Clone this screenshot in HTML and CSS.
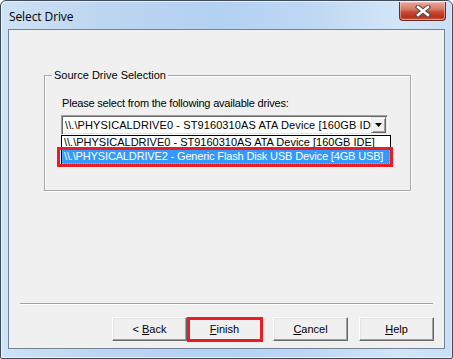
FILE: index.html
```html
<!DOCTYPE html>
<html>
<head>
<meta charset="utf-8">
<link rel="stylesheet" href="styles.css">
</head>
<body>
<div class="window">
  <div class="titlebar">
    <span class="title">Select Drive</span>
    <div class="close">
      <svg width="16" height="12" viewBox="0 0 16 12">
        <path d="M3 2 L13 10 M13 2 L3 10" stroke="#4a4a4a" stroke-width="4.4" stroke-linecap="square"/>
        <path d="M3 2 L13 10 M13 2 L3 10" stroke="#ffffff" stroke-width="2.4" stroke-linecap="square"/>
      </svg>
    </div>
  </div>
  <div class="client">
    <div class="group">
      <span class="group-label">Source Drive Selection</span>
      <div class="prompt">Please select from the following available drives:</div>
      <div class="combo">
        <span class="combo-text">\\.\PHYSICALDRIVE0 - ST9160310AS ATA Device [160GB IDE]</span>
        <span class="combo-btn">
          <svg width="7" height="4" viewBox="0 0 7 4"><path d="M0 0 H7 L3.5 4 Z" fill="#000"/></svg>
        </span>
      </div>
      <div class="droplist">
        <div class="item">\\.\PHYSICALDRIVE0 - ST9160310AS ATA Device [160GB IDE]</div>
        <div class="item selected"><span class="focus">\\.\PHYSICALDRIVE2 - Generic Flash Disk USB Device [4GB USB]</span></div>
      </div>
      <div class="mark mark-list"></div>
    </div>
    <div class="separator"></div>
    <div class="buttons">
      <div class="btn">&lt; <u>B</u>ack</div>
      <div class="btn btn-finish"><u>F</u>inish</div>
      <div class="btn btn-gap"><u>C</u>ancel</div>
      <div class="btn btn-gap"><u>H</u>elp</div>
    </div>
  </div>
</div>
</body>
</html>
```

FILE: styles.css
```css
*, *::before, *::after { box-sizing: border-box; }
html, body { margin: 0; padding: 0; }
body {
  width: 453px;
  height: 359px;
  overflow: hidden;
  background: #ffffff;
  font-family: "Liberation Sans", Arial, sans-serif;
  font-size: 11px;
  color: #000;
}
.window {
  width: 453px;
  height: 359px;
  border: 1px solid #3f4b58;
  border-radius: 6px 6px 2px 2px;
  background: linear-gradient(to right, #cfe2f6 0%, #bdd6f0 22%, #b3d1f3 48%, #bfd8f3 70%, #d3e6f8 88%, #c9dff5 100%);
  display: flex;
  flex-direction: column;
  box-shadow: inset 1px 1px 0 #e6f0fa, inset -1px -1px 0 #e6f0fa;
}
.titlebar {
  height: 28px;
  display: flex;
  align-items: flex-start;
  justify-content: space-between;
  padding-left: 8px;
  padding-right: 6px;
}
.title {
  font-family: "Open Sans", "Noto Sans", sans-serif;
  font-size: 12px;
  color: #000;
  margin-top: 7px;
  letter-spacing: -0.1px;
}
.close {
  width: 47px;
  height: 19px;
  margin-top: 1px;
  border: 1px solid #6a2c22;
  border-top: none;
  border-radius: 0 0 4px 4px;
  background: linear-gradient(to bottom, #e9a99b 0%, #d77a68 40%, #c74a34 55%, #b8301c 85%, #d06a50 100%);
  display: flex;
  align-items: center;
  justify-content: center;
  box-shadow: inset 0 0 0 1px rgba(255,220,210,0.45);
}
.client {
  margin: 0 7px;
  height: 320px;
  border: 1px solid #72849a;
  background: #f0f0f0;
  padding-top: 45px;
}
.group {
  position: relative;
  margin-left: 35px;
  width: 367px;
  height: 116px;
  border: 1px solid #a8a8a8;
  box-shadow: 1px 1px 0 #fff, inset 1px 1px 0 #fff;
  padding: 0 0 0 16px;
}
.group-label {
  display: block;
  width: max-content;
  margin: -7px 0 0 -9px;
  padding: 0 2px;
  line-height: 13px;
  background: #f0f0f0;
}
.prompt {
  margin-top: 15px;
  margin-left: 1px;
  line-height: 13px;
  letter-spacing: -0.2px;
}
.combo {
  margin-top: 5px;
  width: 327px;
  height: 20px;
  border: 1px solid;
  border-color: #a0a0a0 #ffffff #ffffff #a0a0a0;
  box-shadow: inset 1px 1px 0 #696969, inset -1px -1px 0 #e3e3e3;
  background: #fff;
  display: flex;
  align-items: center;
  padding: 0 1px 0 3px;
  overflow: hidden;
}
.combo-text {
  flex: 1;
  white-space: nowrap;
  overflow: hidden;
  line-height: 13px;
  letter-spacing: 0.1px;
}
.combo-btn {
  width: 15px;
  height: 16px;
  background: #f0f0f0;
  border: 1px solid;
  border-color: #e3e3e3 #696969 #696969 #e3e3e3;
  box-shadow: inset 1px 1px 0 #fff, inset -1px -1px 0 #a0a0a0;
  display: flex;
  align-items: center;
  justify-content: center;
}
.droplist {
  position: absolute;
  left: 16px;
  top: 59px;
  width: 330px;
  border: 1px solid #000;
  background: #fff;
  padding: 0 0 1px 0;
}
.item {
  height: 13px;
  line-height: 13px;
  padding-left: 2px;
  white-space: nowrap;
  overflow: hidden;
  letter-spacing: 0;
}
.item.selected {
  height: 15px;
  background: #3399ff;
  color: #fff;
  padding: 0;
  letter-spacing: -0.15px;
}
.focus {
  display: block;
  height: 15px;
  line-height: 13px;
  padding-left: 1px;
  border: 1px dotted #e8a060;
  white-space: nowrap;
  overflow: hidden;
}
.mark {
  position: absolute;
  border: 3px solid #ec1c24;
  pointer-events: none;
}
.mark-list {
  left: 12px;
  top: 71px;
  width: 336px;
  height: 20px;
}
.separator {
  margin: 112px 11px 0 11px;
  border-top: 1px solid #a0a0a0;
  border-bottom: 1px solid #ffffff;
}
.buttons {
  display: flex;
  justify-content: flex-end;
  margin-top: 12px;
  padding-right: 10px;
}
.btn {
  position: relative;
  width: 75px;
  height: 24px;
  line-height: 22px;
  text-align: center;
  background: #f0f0f0;
  border: 1px solid;
  border-color: #ffffff #696969 #696969 #ffffff;
  box-shadow: inset -1px -1px 0 #a0a0a0, inset 1px 1px 0 #e3e3e3;
}
.btn-gap { margin-left: 11px; }
.btn-finish::after {
  content: "";
  position: absolute;
  left: -1px;
  top: -1px;
  width: 76px;
  height: 25px;
  border: 3px solid #ec1c24;
}
u { text-decoration: underline; text-underline-offset: 1px; }
```
